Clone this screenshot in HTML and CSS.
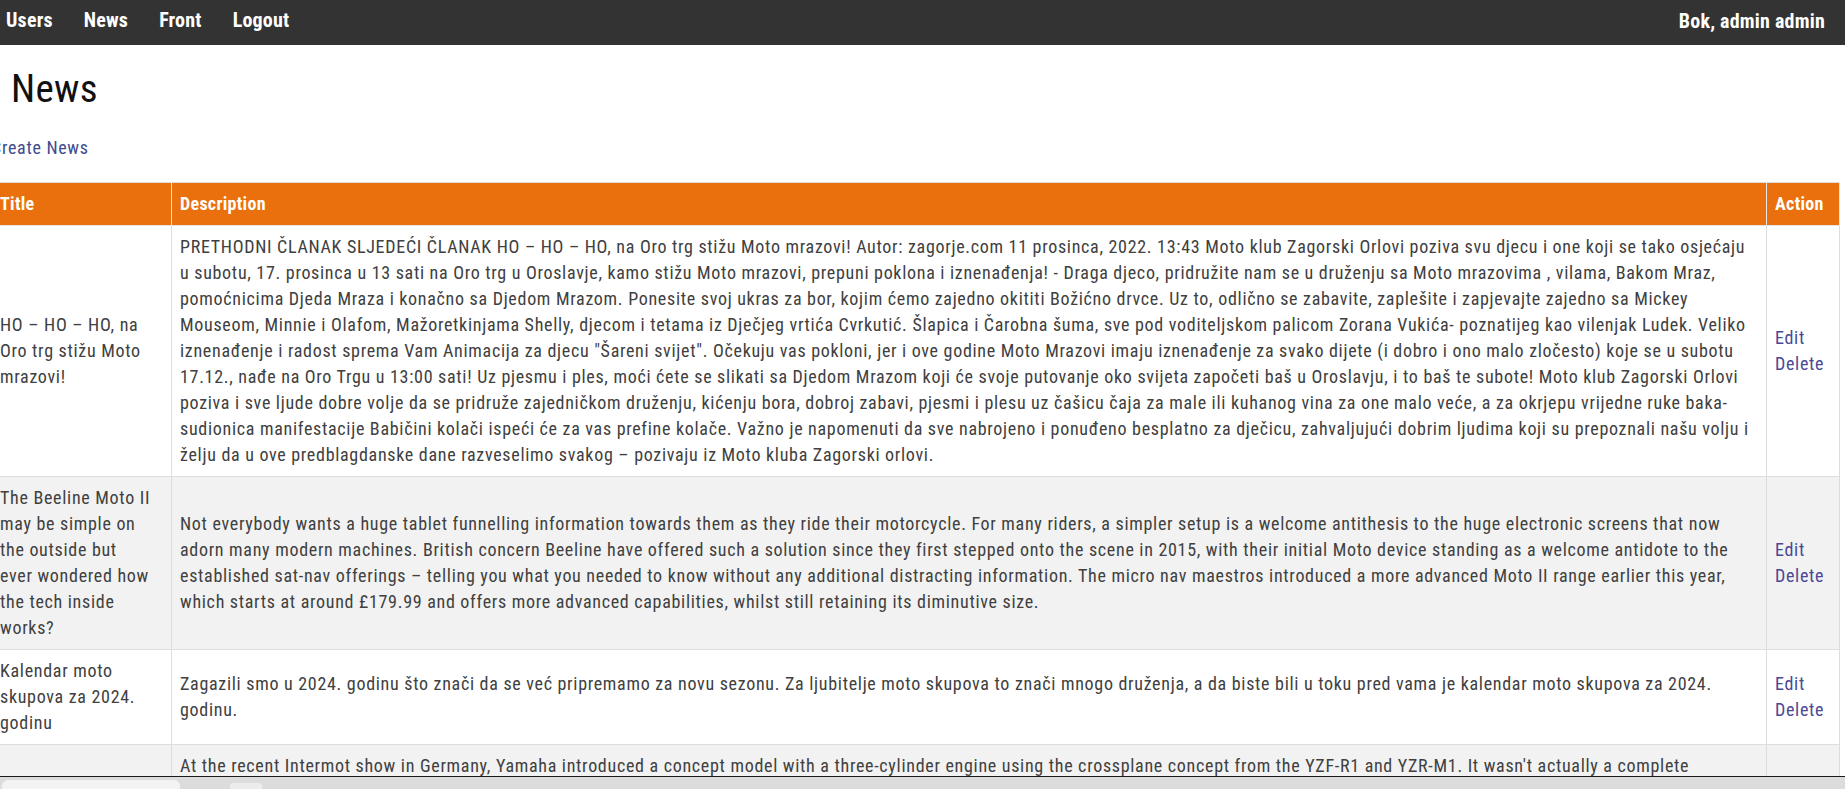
FILE: index.html
```html
<!DOCTYPE html>
<html lang="hr">
<head>
<meta charset="utf-8">
<title>News</title>
<link rel="stylesheet" href="styles.css">
</head>
<body>
<nav class="topbar">
  <ul class="topbar-links">
    <li><a href="#">Users</a></li>
    <li><a href="#">News</a></li>
    <li><a href="#">Front</a></li>
    <li><a href="#">Logout</a></li>
  </ul>
  <div class="topbar-user">Bok, admin admin</div>
</nav>

<main class="page">
  <h1 class="page-title">News</h1>
  <p class="create"><a href="#" class="create-link">Create News</a></p>

  <table class="news-table">
    <colgroup>
      <col class="col-title">
      <col class="col-desc">
      <col class="col-action">
    </colgroup>
    <thead>
      <tr><th>Title</th><th>Description</th><th>Action</th></tr>
    </thead>
    <tbody>
      <tr>
        <td>HO – HO – HO, na Oro trg stižu Moto mrazovi!</td>
        <td>PRETHODNI ČLANAK SLJEDEĆI ČLANAK HO – HO – HO, na Oro trg stižu Moto mrazovi! Autor: zagorje.com 11 prosinca, 2022. 13:43 Moto klub Zagorski Orlovi poziva svu djecu i one koji se tako osjećaju u subotu, 17. prosinca u 13 sati na Oro trg u Oroslavje, kamo stižu Moto mrazovi, prepuni poklona i iznenađenja! - Draga djeco, pridružite nam se u druženju sa Moto mrazovima , vilama, Bakom Mraz, pomoćnicima Djeda Mraza i konačno sa Djedom Mrazom. Ponesite svoj ukras za bor, kojim ćemo zajedno okititi Božićno drvce. Uz to, odlično se zabavite, zaplešite i zapjevajte zajedno sa Mickey Mouseom, Minnie i Olafom, Mažoretkinjama Shelly, djecom i tetama iz Dječjeg vrtića Cvrkutić. Šlapica i Čarobna šuma, sve pod voditeljskom palicom Zorana Vukića- poznatijeg kao vilenjak Ludek. Veliko iznenađenje i radost sprema Vam Animacija za djecu "Šareni svijet". Očekuju vas pokloni, jer i ove godine Moto Mrazovi imaju iznenađenje za svako dijete (i dobro i ono malo zločesto) koje se u subotu 17.12., nađe na Oro Trgu u 13:00 sati! Uz pjesmu i ples, moći ćete se slikati sa Djedom Mrazom koji će svoje putovanje oko svijeta započeti baš u Oroslavju, i to baš te subote! Moto klub Zagorski Orlovi poziva i sve ljude dobre volje da se pridruže zajedničkom druženju, kićenju bora, dobroj zabavi, pjesmi i plesu uz čašicu čaja za male ili kuhanog vina za one malo veće, a za okrjepu vrijedne ruke baka- sudionica manifestacije Babičini kolači ispeći će za vas prefine kolače. Važno je napomenuti da sve nabrojeno i ponuđeno besplatno za dječicu, zahvaljujući dobrim ljudima koji su prepoznali našu volju i želju da u ove predblagdanske dane razveselimo svakog – pozivaju iz Moto kluba Zagorski orlovi.</td>
        <td><a href="#">Edit</a><br><a href="#">Delete</a></td>
      </tr>
      <tr>
        <td>The Beeline Moto II may be simple on the outside but<br>ever wondered how the tech inside works?</td>
        <td>Not everybody wants a huge tablet funnelling information towards them as they ride their motorcycle. For many riders, a simpler setup is a welcome antithesis to the huge electronic screens that now adorn many modern machines. British concern Beeline have offered such a solution since they first stepped onto the scene in 2015, with their initial Moto device standing as a welcome antidote to the established sat-nav offerings – telling you what you needed to know without any additional distracting information. The micro nav maestros introduced a more advanced Moto II range earlier this year, which starts at around £179.99 and offers more advanced capabilities, whilst still retaining its diminutive size.</td>
        <td><a href="#">Edit</a><br><a href="#">Delete</a></td>
      </tr>
      <tr>
        <td>Kalendar moto skupova za 2024. godinu</td>
        <td>Zagazili smo u 2024. godinu što znači da se već pripremamo za novu sezonu. Za ljubitelje moto skupova to znači mnogo druženja, a da biste bili u toku pred vama je kalendar moto skupova za 2024. godinu.</td>
        <td><a href="#">Edit</a><br><a href="#">Delete</a></td>
      </tr>
      <tr>
        <td>Yamaha crossplane concept</td>
        <td>At the recent Intermot show in Germany, Yamaha introduced a concept model with a three-cylinder engine using the crossplane concept from the YZF-R1 and YZR-M1. It wasn't actually a complete motorcycle, more of a rolling engineering study, but it showed where the company is heading with its CP3 engine family. The crankshaft arrangement gives an irregular firing order that is said to improve traction and feel at the rear tyre, something riders of the big R1 have praised for years. Yamaha has not confirmed whether the engine will reach production, though the brand has hinted that the next generation of its popular triples could borrow heavily from the concept, with updated electronics, a revised chassis and a sharper riding position aimed at sport riders who want a lighter alternative to a full superbike. The study also previewed a new exhaust layout, a compact airbox and a redesigned cooling system that keeps the engine narrow between the rider's knees. Engineers at the stand explained that the firing interval was tuned to give a smooth, linear delivery out of slow corners, while still offering the characteristic growl that fans of the triple have come to love. Pricing and availability were, unsurprisingly, not discussed, but visitors were left in little doubt that the crossplane idea has a long future ahead of it across the wider range of Yamaha road bikes, from naked roadsters to sport tourers and beyond.</td>
        <td><a href="#">Edit</a><br><a href="#">Delete</a></td>
      </tr>
    </tbody>
  </table>
</main>

<div class="taskbar">
  <span class="taskbar-pill"></span>
  <span class="taskbar-tab"></span>
</div>
</body>
</html>
```
FILE: styles.css
```css
html, body {
  margin: 0;
  padding: 0;
  overflow: hidden;
}

body {
  font-family: "Roboto Condensed", "Roboto", "Liberation Sans", sans-serif;
  font-size: 18px;
  line-height: 26px;
  color: #404040;
  background: #fff;
  letter-spacing: 0.7px;
}

a {
  color: #4b4796;
  text-decoration: none;
}

/* top navigation */
.topbar {
  height: 45px;
  background: #333;
  display: flex;
  align-items: center;
  justify-content: space-between;
  padding: 0 20px 4px 6px;
  box-sizing: border-box;
}

.topbar-links {
  list-style: none;
  margin: 0;
  padding: 0;
  display: flex;
  gap: 31px;
}

.topbar-links a,
.topbar-user {
  color: #fff;
  font-weight: 700;
  font-size: 20px;
  letter-spacing: 0.2px;
}

/* page */
.page {
  margin-left: -9px;
}

.page-title {
  margin: 23px 0 0 20px;
  font-size: 39px;
  font-weight: 400;
  line-height: 42px;
  color: #111;
  letter-spacing: 0.3px;
}

.create {
  margin: 25px 0 21px 0;
}

.create-link {
  color: #3e4b8e;
}

/* table */
.news-table {
  width: 1849px;
  border-collapse: collapse;
  table-layout: fixed;
}

.col-title { width: 180px; }
.col-action { width: 73px; }

.news-table th,
.news-table td {
  border: 1px solid #ddd;
  padding: 8px;
  text-align: left;
  vertical-align: middle;
}

.news-table th {
  background: #ea700d;
  color: #fff;
  font-weight: 700;
  border-color: #e6e6e6;
  border-top-color: #ddd;
  letter-spacing: 0.3px;
}

.news-table tbody tr:nth-child(even) td {
  background: #f2f2f2;
}

/* bottom strip */
.taskbar {
  position: fixed;
  left: 0;
  right: 0;
  bottom: 0;
  height: 12px;
  background: #dcdcdc;
  border-top: 1px solid #1a1a1a;
  display: flex;
  align-items: flex-end;
  gap: 50px;
  padding-left: 2px;
}

.taskbar-pill {
  width: 178px;
  height: 9px;
  background: #f3f3f3;
  border-radius: 6px 6px 0 0;
}

.taskbar-tab {
  width: 32px;
  height: 6px;
  background: #ececec;
  border-radius: 3px 3px 0 0;
}
```
